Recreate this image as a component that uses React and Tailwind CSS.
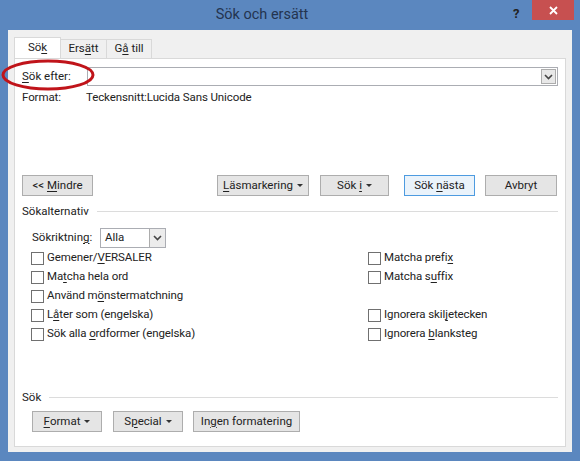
import React from "react";

const font = { fontFamily: 'Roboto, "Noto Sans", sans-serif' };

function U({ children }) {
  return <span className="underline underline-offset-2">{children}</span>;
}

function Caret() {
  return (
    <svg width="6" height="3" viewBox="0 0 6 3" className="ml-[4px] inline-block">
      <path d="M0 0h6L3 3z" fill="#333" />
    </svg>
  );
}

function Chevron() {
  return (
    <svg width="9" height="6" viewBox="0 0 9 6">
      <path d="M1 1l3.5 3.5L8 1" fill="none" stroke="#444" strokeWidth="1.6" />
    </svg>
  );
}

function Btn({ children, className = "", primary }) {
  return (
    <div
      className={`flex h-[21px] items-center justify-center border text-[11.5px] text-[#222] ${
        primary ? "border-[#4d9be0] bg-[#eaf3fb]" : "border-[#adadad] bg-[#e5e5e5]"
      } ${className}`}
    >
      <span className="flex items-center whitespace-pre">{children}</span>
    </div>
  );
}

function Check({ children }) {
  return (
    <div className="flex h-[19px] items-center gap-[3px] text-[11.5px] tracking-[-0.1px] text-[#222]">
      <div className="h-[13px] w-[13px] border border-[#707070] bg-white" />
      <span>{children}</span>
    </div>
  );
}

function Group({ title }) {
  return (
    <div className="flex items-center gap-2 text-[11.5px] text-[#222]">
      <span>{title}</span>
      <div className="h-px flex-1 bg-[#dcdcdc]" />
    </div>
  );
}

export default function App() {
  return (
    <div style={font} className="relative h-[461px] w-[580px] overflow-hidden bg-[#5b87bf]">
      {/* title bar */}
      <div className="relative flex h-[30px] items-center justify-center pr-[56px]">
        <span className="text-[14.5px] text-[#24344f]">Sök och ersätt</span>
        <span className="absolute left-[513px] top-[4px] text-[13px] font-bold text-[#222]">?</span>
        <div className="absolute left-[532px] top-0 flex h-[20px] w-[42px] items-center justify-center bg-[#c75050]">
          <svg width="9" height="9" viewBox="0 0 9 9">
            <path d="M1 1l7 7M8 1L1 8" stroke="#fff" strokeWidth="1.8" />
          </svg>
        </div>
      </div>

      {/* client */}
      <div className="mx-[8px] h-[422px] bg-[#f0f0f0] px-[6px] pt-[8px]">
        {/* tabs */}
        <div className="flex h-[20px] items-end text-[11.5px] text-[#222]">
          <div className="relative z-10 flex h-[21px] w-[47px] items-center justify-center border border-b-0 border-[#d9d9d9] bg-white">
            <span>
              Sö<U>k</U>
            </span>
          </div>
          <div className="flex h-[19px] w-[46px] items-center justify-center border border-b-0 border-l-0 border-[#d9d9d9] bg-[#f0f0f0]">
            <span>
              Ers<U>ä</U>tt
            </span>
          </div>
          <div className="flex h-[19px] w-[45px] items-center justify-center border border-b-0 border-l-0 border-[#d9d9d9] bg-[#f0f0f0]">
            <span>
              G<U>å</U> till
            </span>
          </div>
        </div>

        {/* panel */}
        <div className="h-[389px] w-[552px] border border-[#d9d9d9] bg-white px-[7px] pt-[8px] text-[11.5px] text-[#222]">
          <div className="flex items-center">
            <span className="w-[65px]">
              <U>S</U>ök efter:
            </span>
            <div className="flex h-[19px] flex-1 items-center justify-end border border-[#abadb3] bg-white pr-px">
              <div className="flex h-[15px] w-[15px] items-center justify-center border border-[#acacac] bg-[#e8e8e8]">
                <Chevron />
              </div>
            </div>
          </div>
          <div className="mt-[3px] flex tracking-[-0.1px]">
            <span className="w-[64px]">Format:</span>
            <span>Teckensnitt:Lucida Sans Unicode</span>
          </div>

          <div className="mt-[69px] flex items-center">
            <Btn className="w-[71px]">
              {"<< "}
              <U>M</U>indre
            </Btn>
            <Btn className="ml-[124px] w-[92px]">
              <U>L</U>äsmarkering
              <Caret />
            </Btn>
            <Btn className="ml-[11px] w-[69px]">
              {"Sök "}
              <U>i</U>
              <Caret />
            </Btn>
            <Btn primary className="ml-[15px] w-[71px]">
              {"Sök "}
              <U>n</U>ästa
            </Btn>
            <Btn className="ml-[10px] w-[72px]">Avbryt</Btn>
          </div>

          <div className="mt-[7px]">
            <Group title="Sökalternativ" />
          </div>

          <div className="mt-[7px] flex items-center pl-[10px]">
            <span className="w-[68px]">
              Sökriktnin<U>g</U>:
            </span>
            <div className="flex h-[20px] w-[66px] items-center justify-between border border-[#abadb3] bg-white pl-[4px]">
              <span>Alla</span>
              <div className="flex h-[18px] w-[16px] items-center justify-center border-l border-[#acacac] bg-[#ececec]">
                <Chevron />
              </div>
            </div>
          </div>

          <div className="mt-[1px] flex pl-[9px]">
            <div className="w-[337px]">
              <Check>
                Gemener/<U>V</U>ERSALER
              </Check>
              <Check>
                Ma<U>t</U>cha hela ord
              </Check>
              <Check>
                Använd m<U>ö</U>nstermatchning
              </Check>
              <Check>
                L<U>å</U>ter som (engelska)
              </Check>
              <Check>
                Sök alla <U>o</U>rdformer (engelska)
              </Check>
            </div>
            <div>
              <Check>
                Matcha prefi<U>x</U>
              </Check>
              <Check>
                Matcha s<U>u</U>ffix
              </Check>
              <div className="h-[19px]" />
              <Check>
                Ignorera skil<U>j</U>etecken
              </Check>
              <Check>
                Ignorera <U>b</U>lanksteg
              </Check>
            </div>
          </div>

          <div className="mt-[45px]">
            <Group title="Sök" />
          </div>

          <div className="mt-[5px] flex items-center pl-[10px]">
            <Btn className="w-[70px]">
              <U>F</U>ormat
              <Caret />
            </Btn>
            <Btn className="ml-[11px] w-[70px]">
              S<U>p</U>ecial
              <Caret />
            </Btn>
            <Btn className="ml-[10px] w-[107px]">
              In<U>g</U>en formatering
            </Btn>
          </div>
        </div>
      </div>

      {/* red highlight ellipse */}
      <svg className="absolute left-0 top-[58px]" width="100" height="34" viewBox="0 0 100 34">
        <ellipse cx="48" cy="17" rx="45" ry="14" fill="none" stroke="#c0141a" strokeWidth="3" />
      </svg>
    </div>
  );
}
